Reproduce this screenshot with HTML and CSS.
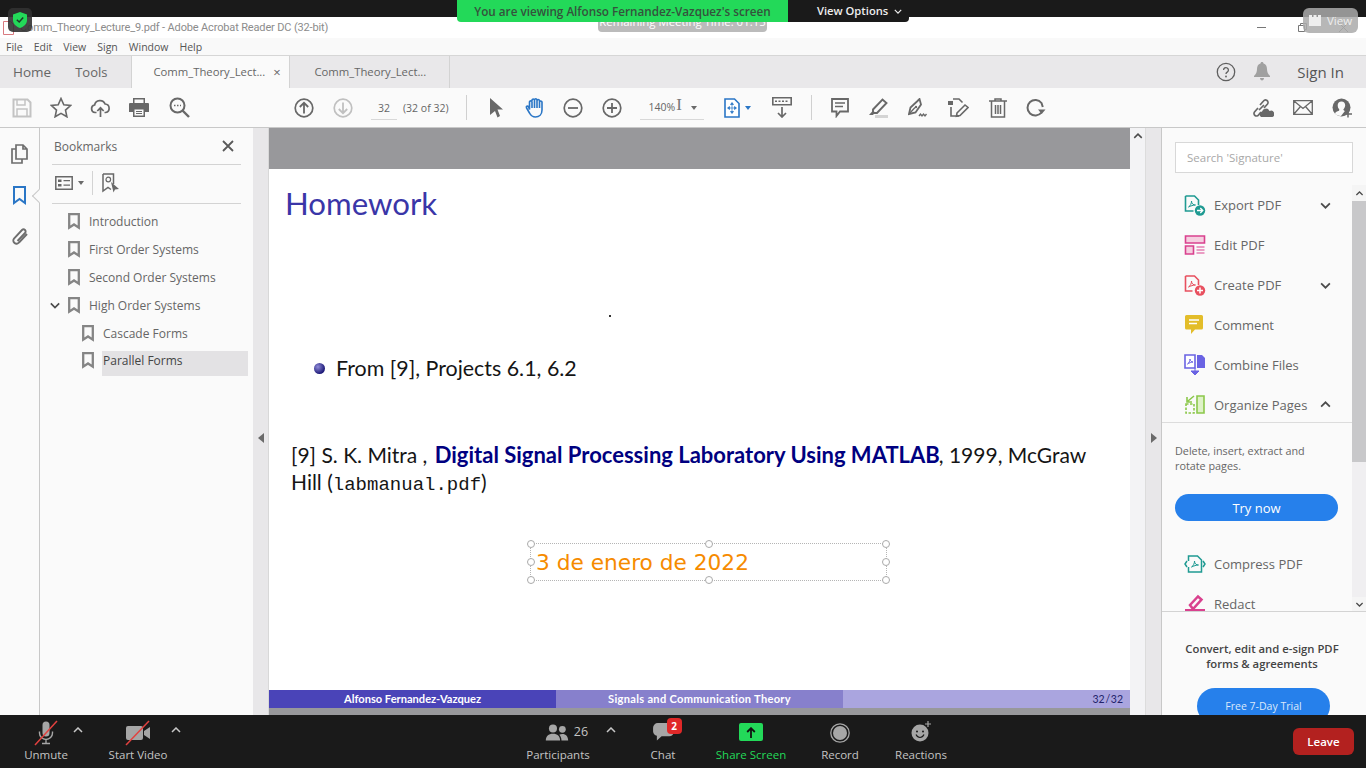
FILE: index.html
```html
<!DOCTYPE html>
<html lang="en">
  <head>
    <meta charset="UTF-8">
    <title>Comm_Theory_Lecture_9.pdf - Adobe Acrobat Reader DC (32-bit)</title>
    <link rel="stylesheet" href="styles.css">
  </head>
  <body>
  <svg class="defs" width="0" height="0">
    <symbol id="bm" viewBox="0 0 12 17"><path d="M1.200 1.200h9.600v13.500L6 11.500l-4.800 3.200z" fill="none" stroke="#858585" stroke-width="2.300"/></symbol>
    <symbol id="chev-down" viewBox="0 0 12 8"><path d="M1 1.500l5 5 5-5" fill="none" stroke="#4b4b4b" stroke-width="2"/></symbol>
    <symbol id="chev-up" viewBox="0 0 12 8"><path d="M1 6.500l5-5 5 5" fill="none" stroke="#4b4b4b" stroke-width="2"/></symbol>
    <symbol id="zcaret" viewBox="0 0 10 6"><path d="M1 5l4-4 4 4" fill="none" stroke="#c8c8c8" stroke-width="1.500"/></symbol>
  </svg>

  <!-- zoom top strip -->
  <div class="top-strip"></div>

  <div class="titlebar">
    <svg class="app-icon" width="11" height="14" viewBox="0 0 11 14"><path d="M.5.500h7l3 3v10H.5z" fill="#fff" stroke="#d97a80"/></svg>
    <span class="title-text">Comm_Theory_Lecture_9.pdf - Adobe Acrobat Reader DC (32-bit)</span>
    <div class="win-controls">
      <svg width="9" height="9" viewBox="0 0 9 9"><path d="M0 4.500h9" stroke="#777"/></svg>
      <svg width="9" height="9" viewBox="0 0 9 9"><path d="M.5 2.500h6v6h-6zM2.500 2.500v-2h6v6h-2" fill="none" stroke="#777"/></svg>
      <svg width="9" height="9" viewBox="0 0 9 9"><path d="M0 0l9 9M9 0l-9 9" stroke="#777"/></svg>
    </div>
  </div>

  <div class="menubar">
    <span>File</span><span>Edit</span><span>View</span><span>Sign</span><span>Window</span><span>Help</span>
  </div>

  <div class="tabs">
    <span class="tab-link tab-home">Home</span>
    <span class="tab-link tab-tools">Tools</span>
    <div class="doc-tab doc-tab-active">Comm_Theory_Lect...<span class="tab-x">×</span></div>
    <div class="doc-tab">Comm_Theory_Lect...</div>
    <div class="tabs-right">
      <svg width="20" height="20" viewBox="0 0 20 20"><circle cx="10" cy="10" r="8.700" fill="none" stroke="#5f5f5f" stroke-width="1.300"/><path d="M7.600 8a2.400 2.400 0 1 1 3.600 2.100c-.8.500-1.200 1-1.200 1.900" fill="none" stroke="#5f5f5f" stroke-width="1.300"/><circle cx="10" cy="14.500" r=".9" fill="#5f5f5f"/></svg>
      <svg class="bell" width="16" height="19" viewBox="0 0 16 19"><path d="M8 0c1 0 1.500.7 1.500 1.500C12 2.300 13 4.500 13 7c0 3 1 5 3 7v1H0v-1c2-2 3-4 3-7 0-2.500 1-4.700 3.500-5.500C6.500.7 7 0 8 0zM6 16h4c0 1.500-1 2.500-2 2.500S6 17.500 6 16z" fill="#a0a0a0"/></svg>
      <span class="sign-in">Sign In</span>
    </div>
  </div>

  <div class="toolbar">
    <div class="tb-group tb-file">
      <svg width="20" height="20" viewBox="0 0 20 20"><path d="M1.500 1.500h14l3 3v14h-17z" fill="none" stroke="#c3c3c3" stroke-width="2"/><path d="M5 2v5h8V2M5 18v-7h10v7" fill="none" stroke="#c3c3c3" stroke-width="1.500"/></svg>
      <svg width="22" height="21" viewBox="0 0 22 21"><path d="M11 1.500l2.800 6.300 6.700.7-5 4.600 1.400 6.700L11 16.400l-5.900 3.400 1.400-6.700-5-4.600 6.700-.7z" fill="none" stroke="#686868" stroke-width="1.600"/></svg>
      <svg width="21" height="20" viewBox="0 0 20 20"><path d="M6 14.500H4.500a3.800 3.800 0 0 1-.4-7.500 5.500 5.500 0 0 1 10.500-1 4.300 4.300 0 0 1 .6 8.500H14M10 19v-9M6.800 13L10 9.800l3.200 3.200" fill="none" stroke="#686868" stroke-width="1.700"/></svg>
      <svg width="20" height="19" viewBox="0 0 20 19"><path d="M4 0h12v5h3a1 1 0 0 1 1 1v8h-4v5H4v-5H0V6a1 1 0 0 1 1-1h3z" fill="#686868"/><path d="M5.500 1.500h9V5h-9zM5.500 11.500h9v6h-9z" fill="#fafafa"/><path d="M7 13.500h6M7 15.500h6" stroke="#686868"/></svg>
      <svg class="tb-find" width="21" height="21" viewBox="0 0 21 21"><circle cx="8.500" cy="8.500" r="7" fill="none" stroke="#686868" stroke-width="2"/><path d="M13.500 13.500l6.500 6.500" stroke="#686868" stroke-width="2.400"/><path d="M5 8.500h1.500M8 8.500h1.500M11 8.500h1" stroke="#686868" stroke-width="1.300"/></svg>
    </div>
    <div class="tb-group tb-page">
      <svg width="20" height="20" viewBox="0 0 20 20"><circle cx="10" cy="10" r="8.800" fill="none" stroke="#686868" stroke-width="1.700"/><path d="M10 15.500V5M5.800 9L10 4.800 14.200 9" fill="none" stroke="#686868" stroke-width="1.800"/></svg>
      <svg width="20" height="20" viewBox="0 0 20 20"><circle cx="10" cy="10" r="8.800" fill="none" stroke="#c0c0c0" stroke-width="1.700"/><path d="M10 4.500V15M5.800 11l4.200 4.200 4.200-4.200" fill="none" stroke="#c0c0c0" stroke-width="1.800"/></svg>
    </div>
    <span class="page-input">32</span>
    <span class="page-count">(32 of 32)</span>
    <span class="tb-sep tb-sep-a"></span>
    <div class="tb-group tb-nav">
      <svg width="15" height="20" viewBox="0 0 15 20"><path d="M1 0l13 11.500H8.500L11 18l-2.500 1.500L6 13l-5 4z" fill="#686868"/></svg>
      <svg width="21" height="21" viewBox="-2 0 21 21"><path d="M4.500 12.500V4.800a1.300 1.300 0 0 1 2.500 0V3a1.300 1.300 0 0 1 2.500 0v-.3a1.300 1.300 0 0 1 2.500 0V3.500a1.300 1.300 0 0 1 2.500 0V5a1.300 1.300 0 0 1 2.500 0v8c0 4.500-3 7-6.500 7-3 0-4.700-1.500-6-4l-3-5c-.7-1.600 1-2.500 2-1.300zM7 5v6M9.500 3v8M12 3.500V11M14.500 5v6" fill="none" stroke="#2a76c6" stroke-width="1.600"/></svg>
      <svg width="20" height="20" viewBox="0 0 20 20"><circle cx="10" cy="10" r="8.800" fill="none" stroke="#686868" stroke-width="1.700"/><path d="M5 10h10" stroke="#686868" stroke-width="1.800"/></svg>
      <svg width="20" height="20" viewBox="0 0 20 20"><circle cx="10" cy="10" r="8.800" fill="none" stroke="#686868" stroke-width="1.700"/><path d="M5 10h10M10 5v10" stroke="#686868" stroke-width="1.800"/></svg>
    </div>
    <span class="zoom-input">140%<span class="i-beam">I</span><i class="caret-small"></i></span>
    <div class="tb-group tb-fit">
      <svg width="16" height="20" viewBox="0 0 16 20"><path d="M1 1h9.500L15 5.500V19H1z" fill="#fff" stroke="#2a76c6" stroke-width="1.600"/><path d="M8 5v10M4 10h8M8 4.500l-1.500 2h3zM8 15.500l-1.500-2h3zM3.500 10l2-1.500v3zM12.500 10l-2-1.500v3z" fill="#2a76c6" stroke="#2a76c6" stroke-width=".7"/></svg>
      <i class="caret-small caret-blue"></i>
    </div>
    <svg class="tb-scroll" width="20" height="21" viewBox="0 0 20 21"><path d="M.8.800h18.400v7H.8z" fill="none" stroke="#686868" stroke-width="1.600"/><path d="M3 4.300h14" stroke="#686868" stroke-dasharray="2 1.500" stroke-width="1.500"/><path d="M10 10v10M6 16l4 4 4-4" fill="none" stroke="#686868" stroke-width="1.700"/></svg>
    <span class="tb-sep tb-sep-b"></span>
    <div class="tb-group tb-edit">
      <svg width="18" height="20" viewBox="0 0 18 20"><path d="M1 1h16v12.500H9L5.500 18v-4.500H1z" fill="none" stroke="#686868" stroke-width="1.800"/><path d="M4 5h10M4 8.500h8" stroke="#686868" stroke-width="1.300"/></svg>
      <svg width="20" height="20" viewBox="0 0 20 20"><path d="M5 11.500L14.500 1.500l4 3.500L9 15H5z" fill="none" stroke="#686868" stroke-width="1.900"/><path d="M5 12.500l2 2-2 2.500H1z" fill="#686868"/><path d="M7 18.500h13" stroke="#d4d4d4" stroke-width="3"/></svg>
      <svg width="20" height="20" viewBox="0 0 20 20"><path d="M11.500 1l1.500 5.500-5.500 8L1 16l1.500-6.500 7-6.500z" fill="none" stroke="#686868" stroke-width="1.800"/><circle cx="8" cy="9" r="1.200" fill="#686868"/><path d="M1.500 15.500L7 9.500M11 18l1.500-2 1.500 2 1.500-2 1.500 2 1.500-2" fill="none" stroke="#686868" stroke-width="1.300"/></svg>
      <svg width="22" height="20" viewBox="0 0 22 20"><path d="M1 3h5v4H1z" fill="#686868"/><path d="M6 1h6l3.500 3.500M4 9v9h8" fill="none" stroke="#686868" stroke-width="1.600"/><path d="M10 15l8-8 3 2.500-8 8-3.500.8z" fill="none" stroke="#686868" stroke-width="1.600"/></svg>
      <svg width="18" height="20" viewBox="0 0 18 20"><path d="M0 3h18M6 3V1h6v2M2.500 3.500V19h13V3.500M6.500 7v9M9 7v9M11.500 7v9" fill="none" stroke="#686868" stroke-width="1.500"/></svg>
      <svg width="20" height="19" viewBox="0 0 20 19"><path d="M15.500 14.500A7.800 7.800 0 1 1 15.500 5l1.300 4" fill="none" stroke="#686868" stroke-width="2"/><path d="M12 13.500h7.500L15.700 18z" fill="#686868" transform="translate(0 -2)"/></svg>
    </div>
    <div class="tb-group tb-share">
      <svg width="22" height="20" viewBox="0 0 22 20"><path d="M8 7L11.500 3a2.500 2.500 0 0 1 4 3L12 10M9 14l-2.500 3a2.500 2.500 0 0 1-4-3L6 10M7 12l5-5" fill="none" stroke="#686868" stroke-width="1.700"/><path d="M9 19a3 3 0 0 1 1-5.500 4 4 0 0 1 7.500-.5 3.300 3.300 0 0 1 3 6z" fill="#686868"/></svg>
      <svg width="20" height="15" viewBox="0 0 20 15"><path d="M.7.700h18.600v13.600H.7zM1 1l9 7.500L19 1M1 14l6.500-7.500M19 14l-6.500-7.500" fill="none" stroke="#686868" stroke-width="1.300"/></svg>
      <svg width="20" height="20" viewBox="0 0 20 20"><circle cx="9.500" cy="9.500" r="9" fill="#686868"/><path d="M9.500 3.500c2.200 0 3.700 1.600 3.700 3.800 0 1.900-1.200 3.500-1.800 4 0 1 .6 1.400 1.500 1.700L9 18c-3 0-5-1-6-2.500.5-1.500 2-2 4-2.700.3-.5.300-1 .200-1.500-.8-.7-1.500-2.200-1.500-4 0-2.200 1.500-3.800 3.800-3.800z" fill="#fafafa"/><path d="M12 16h8M16 12.500v7" stroke="#686868" stroke-width="1.500"/></svg>
    </div>
  </div>

  <div class="main">
    <div class="rail">
      <svg width="17" height="20" viewBox="0 0 17 20"><path d="M5 1h7l4 4v10H5zM12 1v4h4M5 5H1v14h10v-4" fill="none" stroke="#6e6e6e" stroke-width="1.700"/></svg>
      <svg width="13" height="19" viewBox="0 0 13 19"><path d="M1 1h11v16l-5.500-4L1 17z" fill="none" stroke="#2a76c6" stroke-width="2"/></svg>
      <svg width="18" height="19" viewBox="0 0 18 19"><path d="M16 7l-8 8.500a3 3 0 0 1-5-4L11 3a2 2 0 0 1 3 3l-7.500 8" fill="none" stroke="#6e6e6e" stroke-width="1.900"/></svg>
      <i class="rail-notch"></i>
    </div>

    <div class="bookmarks">
      <div class="bm-head">
        <span>Bookmarks</span>
        <svg width="12" height="12" viewBox="0 0 12 12"><path d="M1 1l10 10M11 1L1 11" stroke="#5a5a5a" stroke-width="1.800"/></svg>
      </div>
      <div class="bm-tools">
        <svg width="18" height="14" viewBox="0 0 18 14"><path d="M.8.800h16.400v12.400H.8z" fill="none" stroke="#686868" stroke-width="1.500"/><path d="M3 3.500h3.500v2.500H3zM3 8h3.500v2.500H3z" fill="#686868"/><path d="M8.500 4.700h6.500M8.500 9.200h6.500" stroke="#686868" stroke-width="1.300"/></svg>
        <i class="caret-small"></i>
        <span class="bm-tools-sep"></span>
        <svg width="18" height="20" viewBox="0 0 18 20"><path d="M1 1h10.500v10M1 1v17l5-3.500 3 2" fill="none" stroke="#686868" stroke-width="1.500"/><circle cx="6.300" cy="6.500" r="2.300" fill="none" stroke="#686868" stroke-width="1.200"/><path d="M9 9l8 7-4 .5-1.500 3z" fill="#686868"/></svg>
      </div>
      <ul class="bm-list">
        <li><svg width="12" height="17"><use href="#bm"/></svg><span>Introduction</span></li>
        <li><svg width="12" height="17"><use href="#bm"/></svg><span>First Order Systems</span></li>
        <li><svg width="12" height="17"><use href="#bm"/></svg><span>Second Order Systems</span></li>
        <li class="bm-open"><svg class="bm-chev" width="10" height="7"><use href="#chev-down"/></svg><svg width="12" height="17"><use href="#bm"/></svg><span>High Order Systems</span></li>
        <li class="bm-child"><svg width="12" height="17"><use href="#bm"/></svg><span>Cascade Forms</span></li>
        <li class="bm-child bm-selected"><svg width="12" height="17"><use href="#bm"/></svg><span>Parallel Forms</span></li>
      </ul>
    </div>

    <div class="gutter gutter-left"><i class="arrow-left"></i></div>

    <div class="page">
      <div class="page-head"></div>
      <h1 class="slide-title">Homework</h1>
      <i class="speck"></i>
      <div class="bullet-row"><i class="ball"></i>From [9], Projects 6.1, 6.2</div>
      <p class="ref">[9] S. K. Mitra , <b>Digital Signal Processing Laboratory Using MATLAB</b>, 1999, McGraw<br>Hill (<code>labmanual.pdf</code>)</p>
      <div class="date-box">
        3 de enero de 2022
        <i class="hd h-tl"></i><i class="hd h-tc"></i><i class="hd h-tr"></i>
        <i class="hd h-ml"></i><i class="hd h-mr"></i>
        <i class="hd h-bl"></i><i class="hd h-bc"></i><i class="hd h-br"></i>
      </div>
      <div class="slide-foot">
        <span class="foot-a">Alfonso Fernandez-Vazquez</span>
        <span class="foot-b">Signals and Communication Theory</span>
        <span class="foot-c">32 / 32</span>
      </div>
      <div class="page-tail"></div>
    </div>

    <div class="doc-scroll"><svg width="10" height="6"><use href="#chev-up"/></svg></div>
    <div class="gutter gutter-right"><i class="arrow-right"></i></div>

    <div class="tools-pane">
      <div class="search-box">Search 'Signature'</div>
      <div class="tools-scroller">
        <div class="tools-list">
          <div class="tool">
            <svg width="21" height="21" viewBox="0 0 21 21"><path d="M1 1h9l4 4v5M1 1v15h8" fill="none" stroke="#1f9a92" stroke-width="1.600"/><path d="M4 12c2-1 3-4 3-6 0 3 2 4 4 4-2 0-5 1-7 2z" fill="none" stroke="#1f9a92"/><circle cx="15.500" cy="15.500" r="5.200" fill="#1f9a92"/><path d="M12.500 15.500h5.500M15.800 13l2.500 2.500-2.500 2.500" fill="none" stroke="#fff" stroke-width="1.300"/></svg>
            <span>Export PDF</span><svg class="tool-chev" width="11" height="7"><use href="#chev-down"/></svg>
          </div>
          <div class="tool">
            <svg width="21" height="20" viewBox="0 0 21 20"><path d="M1 1h19v7H1z" fill="#f5cfe0" stroke="#d9418e" stroke-width="1.600"/><path d="M1 11h8v8H1z" fill="#f5cfe0" stroke="#d9418e" stroke-width="1.600"/><path d="M12 12h8M12 15h8M12 18h8" stroke="#d9418e" stroke-width="1.200"/></svg>
            <span>Edit PDF</span>
          </div>
          <div class="tool">
            <svg width="21" height="21" viewBox="0 0 21 21"><path d="M1 1h9l4 4v5M1 1v15h7" fill="none" stroke="#e8505f" stroke-width="1.600"/><path d="M4 12c2-1 3-4 3-6 0 3 2 4 4 4-2 0-5 1-7 2z" fill="none" stroke="#e8505f"/><circle cx="15.500" cy="15.500" r="5.200" fill="#e8505f"/><path d="M12.500 15.500h6M15.500 12.500v6" stroke="#fff" stroke-width="1.500"/></svg>
            <span>Create PDF</span><svg class="tool-chev" width="11" height="7"><use href="#chev-down"/></svg>
          </div>
          <div class="tool">
            <svg width="20" height="20" viewBox="0 0 20 20"><path d="M1.500 0h15A1.500 1.500 0 0 1 18 1.500V13a1.500 1.500 0 0 1-1.500 1.500H10L6 19v-4.500H1.500A1.500 1.500 0 0 1 0 13V1.500A1.500 1.500 0 0 1 1.500 0z" fill="#e3bd2a"/><path d="M4 5h10M4 8.500h8" stroke="#fff" stroke-width="1.300"/></svg>
            <span>Comment</span>
          </div>
          <div class="tool">
            <svg width="22" height="22" viewBox="0 0 22 22"><path d="M1 1h10v13H1z" fill="#fff" stroke="#6a63e3" stroke-width="1.600"/><path d="M13 1h5l3 3v10h-8z" fill="#6a63e3"/><path d="M3.500 10c1.500-1 2.500-3 2.500-5 0 2 1.500 3 3 3-1.500 0-4 1-5.500 2z" fill="none" stroke="#6a63e3"/><path d="M11 14v4M7 17h8l-4 4z" fill="#6a63e3" stroke="#6a63e3"/></svg>
            <span>Combine Files</span>
          </div>
          <div class="tool tool-open">
            <svg width="20" height="19" viewBox="0 0 20 19"><path d="M12 1h7v17h-7z" fill="#dff2c8" stroke="#8cc84b" stroke-width="1.600"/><path d="M1 9h8v9H1z" fill="none" stroke="#8cc84b" stroke-width="1.600" stroke-dasharray="2.500 1.500"/><path d="M9 1L3 6M2 2v5h5" fill="none" stroke="#8cc84b" stroke-width="1.600"/></svg>
            <span>Organize Pages</span><svg class="tool-chev" width="11" height="7"><use href="#chev-up"/></svg>
          </div>
          <p class="tool-desc">Delete, insert, extract and<br>rotate pages.</p>
          <div class="try-now">Try now</div>
          <div class="tool tool-after">
            <svg width="21" height="18" viewBox="0 0 21 18"><path d="M4 6V1h9l4 4v12H4v-5" fill="none" stroke="#1f9a92" stroke-width="1.500"/><path d="M7 12c2-1 3-4 3-6 0 3 2 4 4 4-2 0-5 1-7 2z" fill="none" stroke="#1f9a92"/><path d="M2.500 6l-2 3 2 3M18.500 6l2 3-2 3" fill="none" stroke="#1f9a92" stroke-width="1.500"/></svg>
            <span>Compress PDF</span>
          </div>
          <div class="tool">
            <svg width="20" height="20" viewBox="0 0 20 20"><path d="M5 11L13 2.500l3.500 3L8 15z" fill="none" stroke="#d9418e" stroke-width="2.500"/><path d="M0 15h20v5H0z" fill="#d9418e"/></svg>
            <span>Redact</span>
          </div>
        </div>
        <div class="tools-bar">
          <i class="bar-btn bar-btn-top"><svg width="9" height="5"><use href="#chev-up"/></svg></i>
          <i class="bar-thumb"></i>
          <i class="bar-rest"></i>
          <i class="bar-btn"><svg width="9" height="5"><use href="#chev-down"/></svg></i>
        </div>
      </div>
      <div class="promo">
        <p>Convert, edit and e-sign PDF<br>forms &amp; agreements</p>
        <div class="trial">Free 7-Day Trial</div>
      </div>
    </div>
  </div>

  <!-- zoom meeting controls -->
  <div class="zoom-bar">
    <div class="z-btn z-unmute">
      <svg width="24" height="26" viewBox="0 0 24 26"><path d="M8.500 5a3.500 3.500 0 0 1 7 0v8a3.500 3.500 0 0 1-7 0z" fill="#a6a6a6"/><path d="M5.500 11.500v1.500a6.500 6.500 0 0 0 13 0v-1.500M12 19.500V23M8 23.500h8" fill="none" stroke="#a6a6a6" stroke-width="1.400"/><path d="M1 25L23 1" stroke="#e2413f" stroke-width="1.500"/></svg>
      <span>Unmute</span>
    </div>
    <svg class="z-caret" width="10" height="6"><use href="#zcaret"/></svg>
    <div class="z-btn z-video">
      <svg width="26" height="26" viewBox="0 0 26 26"><path d="M1 8a2 2 0 0 1 2-2h13a2 2 0 0 1 2 2v10a2 2 0 0 1-2 2H3a2 2 0 0 1-2-2zM19 11l6-4v12l-6-4z" fill="#a6a6a6"/><path d="M1 25L24 1" stroke="#e2413f" stroke-width="1.500"/></svg>
      <span>Start Video</span>
    </div>
    <svg class="z-caret" width="10" height="6"><use href="#zcaret"/></svg>

    <div class="z-btn z-people">
      <span class="z-people-icon">
        <svg width="24" height="17" viewBox="0 0 25 19"><circle cx="8" cy="5" r="4.500" fill="#a6a6a6"/><circle cx="18.500" cy="6" r="3.800" fill="#a6a6a6"/><path d="M0 18.500c0-4.500 3-7.500 8-7.500s8 3 8 7.500zM17.500 18.500c0-3-1-5-2.500-6.500 1-.5 2.200-.8 3.500-.8 4 0 6.500 3 6.500 7.300z" fill="#a6a6a6"/></svg>
        <em>26</em>
      </span>
      <span>Participants</span>
    </div>
    <svg class="z-caret z-caret-people" width="10" height="6"><use href="#zcaret"/></svg>
    <div class="z-btn z-chat">
      <span class="z-chat-icon">
        <svg width="21" height="18" viewBox="0 0 22 19"><path d="M5 0h12a5 5 0 0 1 5 5v4a5 5 0 0 1-5 5H9l-5 4.500V13.500A5 5 0 0 1 0 9V5a5 5 0 0 1 5-5z" fill="#a6a6a6"/></svg>
        <b class="badge">2</b>
      </span>
      <span>Chat</span>
    </div>
    <div class="z-btn z-share">
      <span class="share-icon"><svg width="10" height="11" viewBox="0 0 10 11"><path d="M5 11V2M1.200 5L5 1.200 8.800 5" fill="none" stroke="#111" stroke-width="1.800"/></svg></span>
      <span>Share Screen</span>
    </div>
    <div class="z-btn z-record">
      <svg class="z-record-icon" width="20" height="20" viewBox="0 0 20 20"><circle cx="10" cy="10" r="9.200" fill="none" stroke="#a6a6a6" stroke-width="1.300"/><circle cx="10" cy="10" r="7" fill="#a6a6a6"/></svg>
      <span>Record</span>
    </div>
    <div class="z-btn z-react">
      <svg class="z-react-icon" width="21" height="21" viewBox="0 0 21 21"><circle cx="9" cy="12" r="8.500" fill="#a6a6a6"/><circle cx="6" cy="10.500" r="1" fill="#1a1a1a"/><circle cx="12" cy="10.500" r="1" fill="#1a1a1a"/><path d="M5 13.500c1 2 2.500 3 4 3s3-1 4-3" fill="none" stroke="#1a1a1a" stroke-width="1.200"/><path d="M17 0v6M14 3h6" stroke="#a6a6a6" stroke-width="1.200"/></svg>
      <span>Reactions</span>
    </div>
    <div class="leave">Leave</div>
  </div>

  <!-- floating zoom overlays -->
  <div class="shield-pill">
    <svg width="14" height="16" viewBox="0 0 14 16"><path d="M7 0l7 2.500V8c0 4-3 6.500-7 8-4-1.500-7-4-7-8V2.500z" fill="#23d959"/><path d="M3.800 7.800L6.200 10l4-4.500" fill="none" stroke="#1d3a26" stroke-width="1.500"/></svg>
  </div>
  <div class="time-pill">Remaining Meeting Time: 01:15</div>
  <div class="view-banner">
    <span class="view-green">You are viewing Alfonso Fernandez-Vazquez's screen</span>
    <span class="view-options">View Options<svg width="8" height="5" viewBox="0 0 10 6"><path d="M1 1l4 4 4-4" fill="none" stroke="#eee" stroke-width="1.500"/></svg></span>
  </div>
  <div class="view-pill">
    <svg width="12" height="11" viewBox="0 0 12 11"><path d="M0 0h3v2h1.500V0h3v2H9V0h3v11H0z" fill="#eee"/></svg>
    View
  </div>
</body>
</html>
```
FILE: styles.css
```css
* {
  box-sizing: border-box;
}

html,
body {
  margin: 0;
  height: 768px;
  overflow: hidden;
}

body {
  display: flex;
  flex-direction: column;
  position: relative;
  font-family: "Open Sans", "Liberation Sans", sans-serif;
  color: #555;
  background: #fafafa;
}

i {
  display: block;
  font-style: normal;
}

.defs {
  position: absolute;
}

.top-strip {
  height: 17px;
  background: #1a1a1a;
}

/* title + menu */
.titlebar {
  height: 21px;
  background: #fff;
  display: flex;
  align-items: center;
  padding-left: 3px;
  font-family: Roboto, "Liberation Sans", sans-serif;
  font-size: 11px;
  letter-spacing: -.15px;
  color: #8c8c8c;
}

.title-text {
  margin-left: 6px;
}

.win-controls {
  margin-left: auto;
  display: flex;
  gap: 32px;
  padding-right: 18px;
}

.menubar {
  height: 18px;
  background: #f9f9f9;
  border-bottom: 1px solid #d6d6d6;
  display: flex;
  align-items: center;
  padding-left: 6px;
  gap: 11px;
  font-size: 10.500px;
  color: #555;
}

.tabs {
  height: 32px;
  background: #e9e8ea;
  display: flex;
  align-items: center;
  border-bottom: 1px solid #e9e8ea;
}

.tab-link {
  font-size: 13.500px;
  color: #666;
}

.tab-home {
  margin-left: 13px;
}

.tab-tools {
  margin-left: 24px;
  margin-right: 24px;
  font-size: 13px;
}

.doc-tab {
  width: 160px;
  height: 32px;
  display: flex;
  align-items: center;
  padding-left: 24px;
  font-size: 11.300px;
  color: #666;
  border-right: 1px solid #d3d3d3;
}

.doc-tab-active {
  width: 159px;
  padding-left: 21px;
  background: #fafafa;
  border-left: 1px solid #d3d3d3;
}

.tab-x {
  margin-left: 8px;
  font-size: 13px;
}

.tabs-right {
  margin-left: auto;
  display: flex;
  align-items: center;
  padding-right: 22px;
}

.bell {
  margin-left: 18px;
}

.sign-in {
  margin-left: 27px;
  font-size: 15px;
  color: #555;
}

/* acrobat toolbar */
.toolbar {
  height: 40px;
  background: #fafafa;
  border-bottom: 1px solid #c8c8c8;
  display: flex;
  align-items: center;
  font-size: 10.500px;
  color: #666;
}

.tb-group {
  display: flex;
  align-items: center;
}

.tb-file {
  margin-left: 12px;
  gap: 18px;
}

.tb-find {
  margin-left: 2px;
}

.tb-page {
  margin-left: 104px;
  gap: 19px;
}

.page-input {
  margin-left: 18px;
  width: 26px;
  height: 24px;
  line-height: 24px;
  text-align: center;
  border-bottom: 1px solid #d8d8d8;
}

.page-count {
  margin-left: 6px;
}

.tb-sep {
  width: 1px;
  height: 25px;
  background: #d0d0d0;
}

.tb-sep-a {
  margin-left: 17px;
}

.tb-nav {
  margin-left: 22px;
  gap: 19px;
}

.zoom-input {
  position: relative;
  margin-left: 18px;
  width: 64px;
  height: 24px;
  line-height: 24px;
  padding-left: 9px;
  border-bottom: 1px solid #d8d8d8;
  display: flex;
  align-items: center;
}

.i-beam {
  margin-left: 1px;
  margin-top: -5px;
  font-size: 17px;
  font-family: "Liberation Serif", serif;
  color: #777;
}

.caret-small {
  width: 0;
  height: 0;
  border-left: 3.500px solid transparent;
  border-right: 3.500px solid transparent;
  border-top: 4px solid #6a6a6a;
}

.zoom-input .caret-small {
  position: absolute;
  right: 7px;
  top: 10px;
}

.caret-blue {
  border-top-color: #2a76c6;
  margin-left: 5px;
}

.tb-fit {
  margin-left: 20px;
}

.tb-scroll {
  margin-left: 21px;
}

.tb-sep-b {
  margin-left: 19px;
}

.tb-edit {
  margin-left: 19px;
  gap: 19.500px;
}

.tb-share {
  margin-left: auto;
  padding-right: 14px;
  gap: 19px;
}

/* main area */
.main {
  height: 587px;
  display: flex;
  overflow: hidden;
}

.rail {
  position: relative;
  width: 40px;
  padding-top: 16px;
  border-right: 1px solid #c8c8c8;
  display: flex;
  flex-direction: column;
  align-items: center;
  gap: 22px;
  background: #fafafa;
}

.rail-notch {
  position: absolute;
  left: 34px;
  top: 63px;
  width: 10px;
  height: 10px;
  background: #fafafa;
  border-left: 1px solid #c8c8c8;
  border-bottom: 1px solid #c8c8c8;
  transform: rotate(45deg);
}

.bookmarks {
  width: 213px;
  padding: 0 5px 0 12px;
  background: #fafafa;
}

.bm-head {
  height: 37px;
  padding: 0 7px 0 2px;
  display: flex;
  justify-content: space-between;
  align-items: center;
  font-size: 12px;
  color: #666;
  border-bottom: 1px solid #d3d3d3;
  margin-right: 7px;
}

.bm-tools {
  height: 39px;
  display: flex;
  align-items: center;
  padding: 0 0 2px 3px;
  border-bottom: 1px solid #d3d3d3;
  margin-right: 7px;
}

.bm-tools .caret-small {
  margin-left: 5px;
}

.bm-tools-sep {
  width: 1px;
  height: 24px;
  background: #d3d3d3;
  margin: 0 9px 0 8px;
}

.bm-list {
  list-style: none;
  margin: 4px 0 0;
  padding: 0;
  font-size: 12px;
  color: #666;
}

.bm-list li {
  position: relative;
  height: 27.800px;
  display: flex;
  align-items: center;
  padding-left: 16px;
}

.bm-list li span {
  margin-left: 9px;
  line-height: 25px;
}

.bm-chev {
  position: absolute;
  left: -2px;
  top: 11px;
}

.bm-list .bm-child {
  padding-left: 30px;
}

.bm-list .bm-selected span {
  flex: 1;
  margin: 5px 0 0 8px;
  padding: 0 0 5px 1px;
  line-height: 20px;
  background: #e3e2e4;
  color: #444;
}

.gutter {
  width: 16px;
  background: #e8e7e9;
  display: flex;
  align-items: center;
  justify-content: center;
  border-right: 1px solid #d8d8d8;
  padding-top: 33px;
}

.arrow-left {
  border-top: 5px solid transparent;
  border-bottom: 5px solid transparent;
  border-right: 6px solid #6a6a6a;
}

.arrow-right {
  border-top: 5px solid transparent;
  border-bottom: 5px solid transparent;
  border-left: 6px solid #6a6a6a;
}

/* the pdf page */
.page {
  position: relative;
  width: 861px;
  background: #fff;
  display: flex;
  flex-direction: column;
  font-family: Lato, "Liberation Sans", sans-serif;
  color: #151515;
}

.page-head {
  height: 41px;
  background: #98989b;
}

.slide-title {
  margin: 14px 0 0 16px;
  font-size: 31.200px;
  line-height: 40px;
  font-weight: 400;
  color: #3a36a8;
}

.speck {
  width: 2px;
  height: 2px;
  margin: 92px 0 0 340px;
  background: #333;
}

.bullet-row {
  display: flex;
  align-items: center;
  margin: 37px 0 0 45px;
  height: 28px;
  font-size: 21.400px;
}

.ball {
  width: 11px;
  height: 11px;
  margin-right: 11px;
  border-radius: 50%;
  background: radial-gradient(circle at 35% 35%, #8f8bd8, #1d1a78 70%);
}

.ref {
  margin: 59px 0 0 22px;
  font-size: 21px;
  line-height: 27px;
  white-space: nowrap;
}

.ref b {
  margin: 0 -1px 0 2px;
  font-size: 22px;
  color: #000080;
}

.ref code {
  font-family: "Liberation Mono", monospace;
  font-size: 19px;
}

.date-box {
  position: relative;
  margin: 44px 0 0 261px;
  width: 357px;
  height: 38px;
  border: 1px dotted #b5b5b5;
  padding-left: 5px;
  font-family: "DejaVu Sans", sans-serif;
  font-size: 21.700px;
  line-height: 38px;
  color: #f68b00;
}

.hd {
  position: absolute;
  width: 8px;
  height: 8px;
  border: 1px solid #aaa;
  border-radius: 50%;
  background: #fff;
}

.h-tl { left: -4px; top: -4px; }
.h-tc { left: 174px; top: -4px; }
.h-tr { right: -4px; top: -4px; }
.h-ml { left: -4px; top: 14px; }
.h-mr { right: -4px; top: 14px; }
.h-bl { left: -4px; bottom: -4px; }
.h-bc { left: 174px; bottom: -4px; }
.h-br { right: -4px; bottom: -4px; }

.slide-foot {
  margin-top: auto;
  height: 18px;
  display: flex;
  color: #fff;
  font-size: 11.100px;
  font-weight: 700;
  line-height: 18px;
  text-align: center;
}

.slide-foot span {
  flex: 0 0 287px;
}

.foot-a {
  background: #4a44b8;
}

.foot-b {
  background: #8780cc;
  letter-spacing: .3px;
}

.foot-c {
  background: #aaa5df;
  color: #23236a;
  font-size: 10.500px;
  font-weight: 400;
  text-align: right;
  padding-right: 7px;
  word-spacing: -2px;
}

.page-tail {
  height: 7px;
  background: #98989b;
}

.doc-scroll {
  width: 15px;
  background: #f3f3f5;
  display: flex;
  justify-content: center;
  padding-top: 5px;
}

.gutter-right {
  width: 17px;
  border-left: 1px solid #dcdcdc;
  border-right: 1px solid #c8c8c8;
}

/* right tools pane */
.tools-pane {
  flex: 1;
  display: flex;
  flex-direction: column;
  background: #fafafa;
  font-size: 13px;
  color: #666;
}

.search-box {
  margin: 14px 13px 0;
  height: 31px;
  border: 1px solid #d8d8d8;
  background: #fff;
  padding-left: 11px;
  line-height: 29px;
  font-size: 11.500px;
  color: #a8a8a8;
}

.tools-scroller {
  margin-top: 12px;
  height: 426px;
  display: flex;
  overflow: hidden;
}

.tools-list {
  flex: 1;
}

.tool {
  height: 40px;
  display: flex;
  align-items: center;
  padding-left: 22px;
}

.tool > svg:first-child {
  flex: none;
  width: 22px;
}

.tool span {
  margin-left: 8px;
}

.tool-chev {
  margin-left: auto;
  margin-right: 21px;
}

.tool-open {
  height: 38px;
  padding-top: 2px;
  border-bottom: 1px solid #dcdcdc;
}

.tool-desc {
  margin: 20px 0 0 13px;
  font-size: 10.800px;
  line-height: 15px;
}

.try-now {
  margin: 21px 14px 0 13px;
  height: 27px;
  line-height: 29px;
  border-radius: 14px;
  background: #2680eb;
  color: #fff;
  text-align: center;
}

.tool-after {
  margin-top: 23px;
}

.tools-bar {
  width: 14px;
  display: flex;
  flex-direction: column;
  background: #f0eff1;
}

.bar-btn {
  height: 14px;
  display: flex;
  align-items: center;
  justify-content: center;
  background: #f5f5f5;
}

.bar-btn-top {
  height: 16px;
}

.bar-thumb {
  height: 261px;
  background: #c8c8ca;
}

.bar-rest {
  flex: 1;
}

.promo {
  flex: 1;
  border-top: 1px solid #d3d3d3;
  text-align: center;
  overflow: hidden;
}

.promo p {
  margin: 30px 4px 0 0;
  font-size: 11.300px;
  line-height: 14.500px;
  font-weight: 600;
  color: #444;
}

.trial {
  margin: 17px auto 0 35px;
  width: 133px;
  height: 36px;
  line-height: 36px;
  border-radius: 18px;
  background: #2680eb;
  color: #dbe9fb;
  font-size: 10.500px;
}

/* zoom toolbar */
.zoom-bar {
  height: 53px;
  background: #1a1a1a;
  display: flex;
  align-items: flex-start;
  padding-left: 20px;
  font-size: 11.500px;
  color: #c4c4c4;
}

.z-btn {
  height: 53px;
  padding: 5px 0 6px;
  display: flex;
  flex-direction: column;
  align-items: center;
  justify-content: space-between;
  white-space: nowrap;
}

.z-caret {
  flex: none;
  margin: 12px 1px 0;
}

.z-unmute {
  width: 52px;
}

.z-video {
  width: 64px;
  margin-left: 22px;
}

.z-people {
  width: 64px;
  margin-left: 344px;
}

.z-people-icon {
  display: flex;
  align-items: flex-start;
  margin: 4px 0 0 17px;
}

.z-people-icon em {
  margin: 1px 0 0 5px;
  font-style: normal;
  font-size: 12.500px;
  line-height: 14px;
}

.z-caret-people {
  margin-left: 16px;
}

.z-chat {
  width: 40px;
  margin-left: 26px;
}

.z-chat-icon {
  position: relative;
  display: block;
  height: 19px;
  margin-top: 3px;
}

.badge {
  position: absolute;
  left: 14px;
  top: -5px;
  width: 15px;
  height: 16px;
  line-height: 16px;
  border-radius: 4px;
  background: #e02828;
  color: #fff;
  font-size: 10px;
  text-align: center;
}

.z-share {
  width: 70px;
  margin-left: 33px;
  color: #23d959;
}

.share-icon {
  width: 24px;
  height: 18px;
  margin-top: 3px;
  border-radius: 2px;
  background: #23d959;
  display: flex;
  align-items: center;
  justify-content: center;
}

.z-record {
  width: 44px;
  margin-left: 32px;
}

.z-record-icon {
  margin-top: 3px;
}

.z-react {
  width: 52px;
  margin-left: 33px;
}

.z-react-icon {
  margin-top: 1px;
}

.leave {
  margin: 13px 12px 0 auto;
  width: 61px;
  height: 27px;
  line-height: 27px;
  border-radius: 6px;
  background: #b3211f;
  color: #fff;
  font-weight: 600;
  text-align: center;
}

/* floating overlays */
.shield-pill {
  position: absolute;
  left: 8px;
  top: 8px;
  width: 24px;
  height: 24px;
  border-radius: 5px;
  background: rgba(50, 50, 50, .9);
  display: flex;
  align-items: center;
  justify-content: center;
}

.time-pill {
  position: absolute;
  left: 598px;
  top: 12px;
  width: 169px;
  height: 20px;
  border-radius: 4px;
  background: #bbb;
  color: #fff;
  font-size: 11.400px;
  line-height: 20px;
  text-align: center;
}

.view-banner {
  position: absolute;
  left: 457px;
  top: 0;
  height: 22px;
  width: 452px;
  display: flex;
  font-size: 11.700px;
  font-weight: 600;
  line-height: 22px;
  border-radius: 0 0 4px 4px;
  overflow: hidden;
}

.view-green {
  width: 331px;
  background: #23d959;
  color: #35523d;
  text-align: center;
}

.view-options {
  flex: 1;
  background: #1a1a1a;
  color: #eee;
  padding-left: 29px;
  font-size: 11.200px;
  display: flex;
  align-items: center;
  gap: 6px;
}

.view-pill {
  position: absolute;
  left: 1303px;
  top: 8px;
  width: 55px;
  height: 25px;
  border-radius: 6px;
  background: rgba(170, 170, 170, .85);
  color: #eee;
  font-size: 11.500px;
  display: flex;
  align-items: center;
  padding-left: 6px;
  gap: 6px;
}
```
